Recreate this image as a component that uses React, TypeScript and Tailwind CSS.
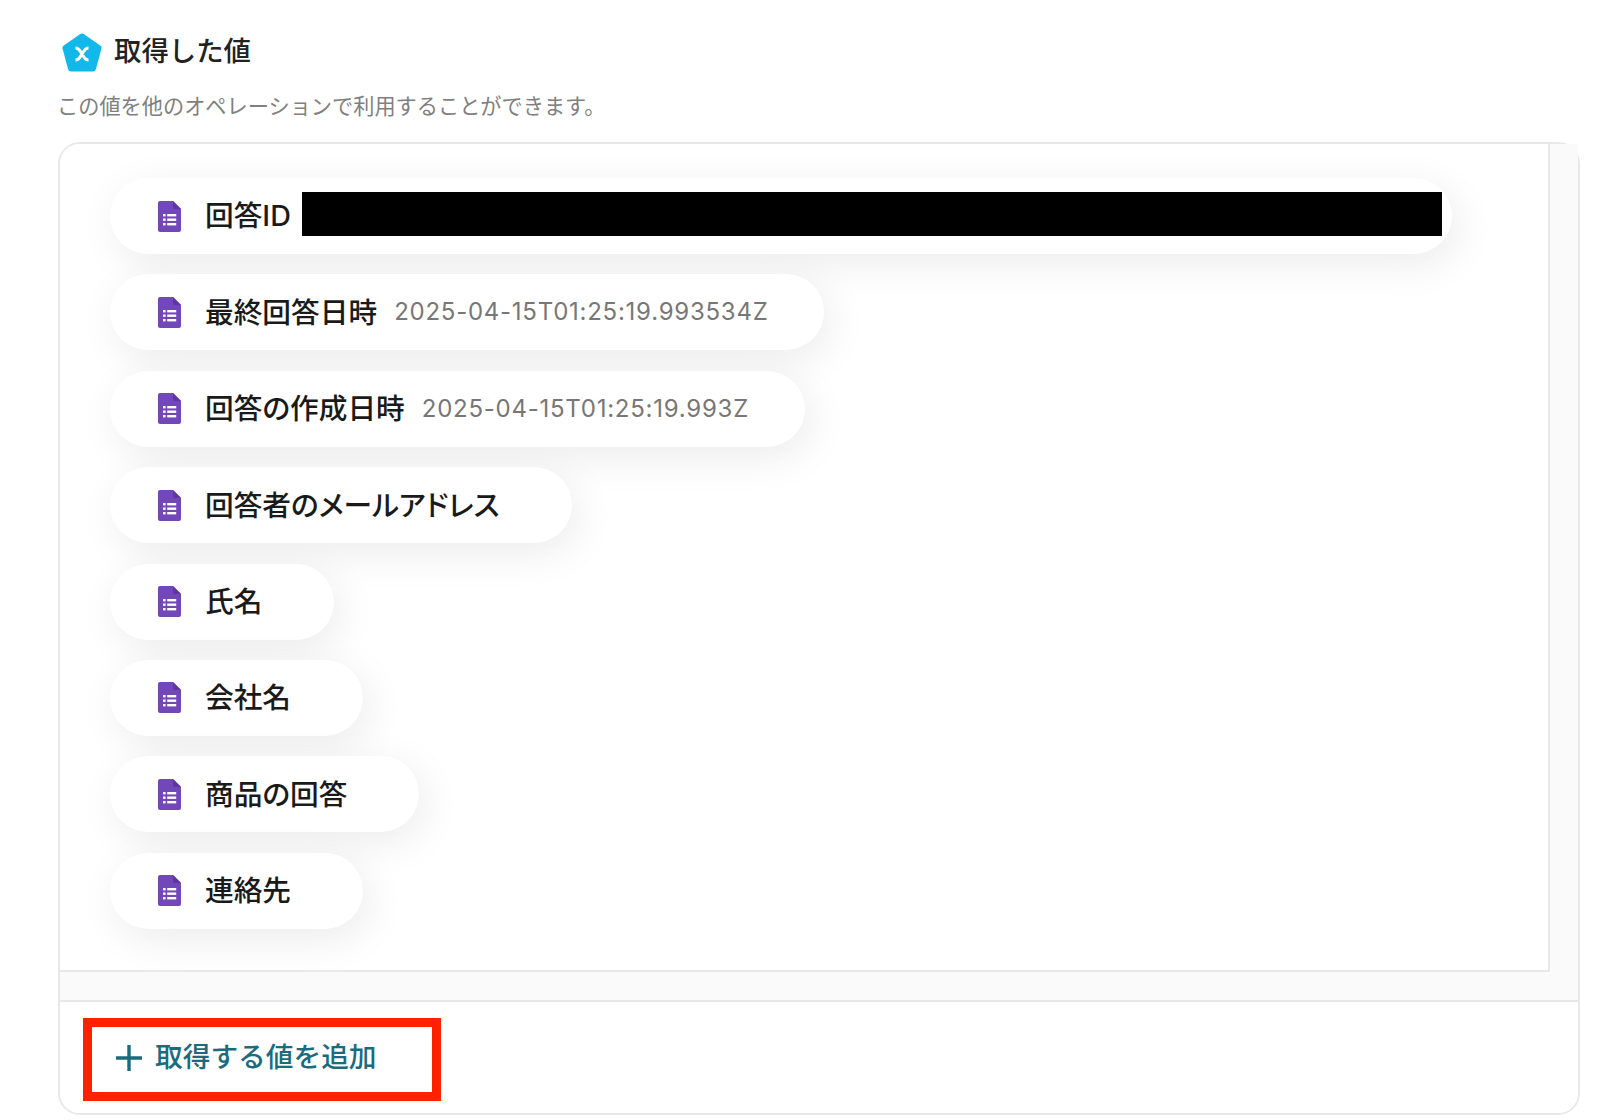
const rows = [
  { label: '最終回答日時', value: '2025-04-15T01:25:19.993534Z', width: 'w-[714px]' },
  { label: '回答の作成日時', value: '2025-04-15T01:25:19.993Z', width: 'w-[695px]' },
  { label: '回答者のメールアドレス', width: 'w-[462px]' },
  { label: '氏名', width: 'w-[224px]' },
  { label: '会社名', width: 'w-[253px]' },
  { label: '商品の回答', width: 'w-[309px]' },
  { label: '連絡先', width: 'w-[253px]' },
];

function FormsIcon() {
  return (
    <svg viewBox="0 0 23 31" className="w-[23px] h-[31px] shrink-0">
      <path d="M2 0H15L23 8V29a2 2 0 0 1-2 2H2a2 2 0 0 1-2-2V2a2 2 0 0 1 2-2Z" fill="#7248B9" />
      <path d="M15 0L23 8H17a2 2 0 0 1-2-2Z" fill="#5E35A6" />
      <g fill="#fff">
        <rect x="5" y="13" width="2.6" height="2.4" />
        <rect x="9.2" y="13" width="9" height="2.4" />
        <rect x="5" y="17.5" width="2.6" height="2.4" />
        <rect x="9.2" y="17.5" width="9" height="2.4" />
        <rect x="5" y="22" width="2.6" height="2.4" />
        <rect x="9.2" y="22" width="9" height="2.4" />
      </g>
    </svg>
  );
}

function Logo() {
  return (
    <svg viewBox="0 0 40 39" className="w-[40px] h-[39px] shrink-0">
      <path
        d="M20 3.5L36.5 15L31 35.5H9L3.5 15Z"
        fill="#12B8EA"
        stroke="#12B8EA"
        strokeWidth="6"
        strokeLinejoin="round"
      />
      <path
        d="M13.5 15C17.5 15 18 18.5 20 21C22 23.5 22.5 27 26.5 27M26.5 15C22.5 15 22 18.5 20 21C18 23.5 17.5 27 13.5 27"
        fill="none"
        stroke="#fff"
        strokeWidth="3"
      />
    </svg>
  );
}

function Pill({ label, value, width }: { label: string; value?: string; width: string }) {
  return (
    <div className={`${width} h-[76px] rounded-[38px] bg-white shadow-[6px_10px_40px_rgba(0,0,0,0.08)] flex items-center pl-[48px]`}>
      <FormsIcon />
      <span className="ml-[24px] text-[28.7px] font-medium text-[#1a1a1a] whitespace-nowrap [font-feature-settings:'palt']">
        {label}
      </span>
      {value && (
        <span className="ml-[17px] text-[24px] text-[#777777] tracking-[0.75px] whitespace-nowrap">{value}</span>
      )}
    </div>
  );
}

export default function App() {
  return (
    <div className="h-[1120px] w-[1600px] bg-white overflow-hidden font-['Inter','Noto_Sans_CJK_JP',sans-serif]">
      {/* Header */}
      <div className="pt-[32px] pl-[62px] flex items-center h-[40px] box-content">
        <Logo />
        <h2 className="ml-[12px] text-[27.4px] font-medium text-[#222222] leading-none">取得した値</h2>
      </div>
      <p className="mt-[19px] pl-[57px] text-[21.2px] leading-[30px] text-[#808080]">
        この値を他のオペレーションで利用することができます。
      </p>

      {/* Card */}
      <div className="mt-[21px] ml-[58px] w-[1522px] h-[973px] rounded-[22px] border-2 border-[#e8e8e8] flex flex-col">
        <div className="flex-1 bg-[#fafafa] rounded-tl-[20px] pr-[28px] pb-[28px]">
          <div className="h-full bg-white border-r-2 border-b-2 border-[#e8e8e8] rounded-tl-[20px] pl-[50px] pt-[34px] flex flex-col gap-[20.4px]">
            <div className="w-[1342px] h-[76px] rounded-[38px] bg-white shadow-[6px_10px_40px_rgba(0,0,0,0.08)] flex items-center pl-[48px]">
              <FormsIcon />
              <span className="ml-[24px] text-[28.7px] font-medium text-[#1a1a1a] whitespace-nowrap">回答ID</span>
              <div className="ml-[11px] mb-[5px] w-[1140px] h-[44px] bg-black" />
            </div>
            {rows.map((row) => (
              <Pill key={row.label} {...row} />
            ))}
          </div>
        </div>
        <div className="h-[113px] border-t-2 border-[#e8e8e8] bg-white rounded-b-[20px] pt-[16px] pl-[23px]">
          <button className="w-[358px] h-[83px] border-[9px] border-[#ff2200] bg-white flex items-center pl-[24px] pb-[4px] text-[#1b6b7f]">
            <svg viewBox="0 0 26 26" className="w-[26px] h-[26px]">
              <path d="M13 0V26M0 13H26" stroke="#1b6b7f" strokeWidth="3.4" fill="none" />
            </svg>
            <span className="ml-[13px] text-[27.7px] font-medium whitespace-nowrap">取得する値を追加</span>
          </button>
        </div>
      </div>
    </div>
  );
}
